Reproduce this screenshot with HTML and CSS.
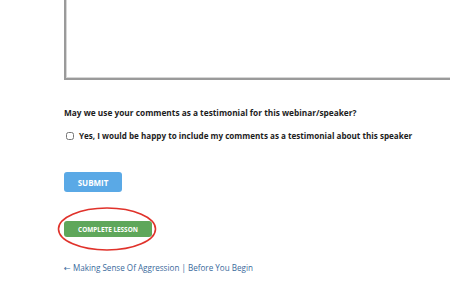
FILE: index.html
```html
<!DOCTYPE html>
<html lang="en">
<head>
  <meta charset="UTF-8" />
  <title>Lesson feedback</title>
  <meta name="viewport" content="width=device-width, initial-scale=1" />
  <link rel="stylesheet" href="styles.css">
</head>
<body>

  <main class="lesson">
    <form class="feedback">
      <textarea class="comments" name="comments"></textarea>

      <p class="question">May we use your comments as a testimonial for this webinar/speaker?</p>

      <label class="consent">
        <input type="checkbox" name="testimonial" />
        <span>Yes, I would be happy to include my comments as a testimonial about this speaker</span>
      </label>

      <button type="button" class="btn btn-submit">Submit</button>
    </form>

    <div class="complete-wrap">
      <button type="button" class="btn btn-complete">Complete Lesson</button>
      <svg class="highlight" width="100" height="46" viewBox="0 0 100 46">
        <ellipse cx="50" cy="23" rx="48.5" ry="21" fill="none" stroke="#e0322b" stroke-width="1.6" />
      </svg>
    </div>

    <nav class="lesson-nav">
      <a href="#" class="prev-link">&larr; Making Sense Of Aggression | Before You Begin</a>
    </nav>
  </main>

</body>
</html>
```

FILE: styles.css
```css
:root {
  --color-text: #1d1d1d;
  --color-blue: #5aa9e6;
  --color-green: #5fa75b;
  --color-link: #3a6a9c;
  --font-main: 'Open Sans', 'DejaVu Sans', sans-serif;
}

html,
body {
  margin: 0;
  overflow: hidden;
  background: #ffffff;
}

body {
  font-family: var(--font-main);
  color: var(--color-text);
}

.lesson {
  padding-left: 64px;
}

.feedback {
  display: flex;
  flex-direction: column;
  align-items: flex-start;
}

.comments {
  display: block;
  box-sizing: border-box;
  width: 420px;
  height: 80px;
  margin: 0;
  border: 2px solid #9a9a9a;
  border-top: none;
  border-radius: 0;
  resize: none;
  background: #fff;
  box-shadow: inset 1px -1px 0 #d6d6d6;
}

.question {
  margin: 27px 0 0;
  font-size: 8.3px;
  font-weight: 700;
  line-height: 12px;
}

.consent {
  display: flex;
  align-items: center;
  margin-top: 11px;
  font-size: 8.1px;
  font-weight: 700;
  line-height: 12px;
}

.consent input {
  width: 8px;
  height: 8px;
  margin: 0 5px 0 2px;
}

.btn {
  border: none;
  color: #fff;
  font-family: var(--font-main);
  font-weight: 700;
  text-transform: uppercase;
  cursor: pointer;
  border-radius: 3px;
}

.btn-submit {
  margin-top: 30px;
  width: 58px;
  height: 20px;
  padding: 0;
  font-size: 8px;
  background: var(--color-blue);
}

.complete-wrap {
  position: relative;
  display: inline-block;
  margin-top: 29px;
}

.btn-complete {
  display: block;
  width: 88px;
  height: 16px;
  padding: 0;
  font-size: 6.4px;
  background: var(--color-green);
}

.highlight {
  position: absolute;
  left: -7px;
  top: -15px;
}

.lesson-nav {
  margin-top: 17px;
}

.prev-link {
  font-size: 8.1px;
  color: var(--color-link);
  text-decoration: none;
}
```
